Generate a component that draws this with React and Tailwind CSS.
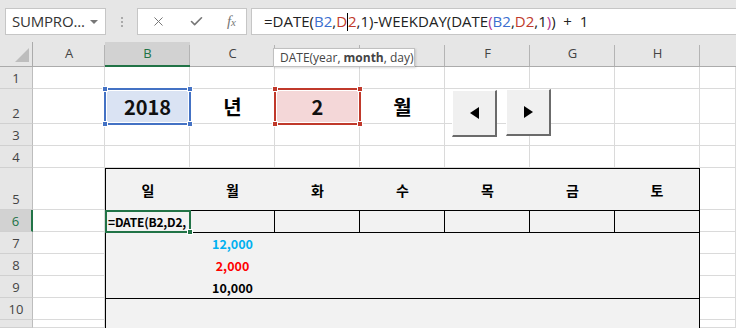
import { X, Check } from 'lucide-react';

const COLS = ['A', 'B', 'C', 'D', 'E', 'F', 'G', 'H', ''];
const ROWS = [
  { n: 1, h: 22 },
  { n: 2, h: 35 },
  { n: 3, h: 22 },
  { n: 4, h: 22 },
  { n: 5, h: 42 },
  { n: 6, h: 22 },
  { n: 7, h: 22 },
  { n: 8, h: 22 },
  { n: 9, h: 22 },
  { n: 10, h: 22 },
  { n: 11, h: 8 },
];
const DAYS = ['일', '월', '화', '수', '목', '금', '토'];

const ui = { fontFamily: '"Open Sans", "Noto Sans", sans-serif' };
const cell = { fontFamily: '"Noto Sans CJK KR", "Noto Sans", sans-serif' };

const GRID =
  'grid grid-cols-[33px_72px_repeat(7,85px)_1fr] grid-rows-[25px_22px_35px_22px_22px_42px_22px_22px_22px_22px_22px_8px]';

const Handle = ({ pos, color }) => (
  <span className={`absolute w-[6px] h-[6px] border border-white ${color} ${pos}`} />
);

const Formula = () => (
  <div className="flex items-center h-full pl-3 text-[15px] text-[#222] whitespace-nowrap" style={ui}>
    <span>=DATE(</span>
    <span className="text-[#3b6fcf]">B2</span>
    <span>,</span>
    <span className="text-[#c0392b]">D</span>
    <span className="inline-block w-px h-[18px] bg-black" />
    <span className="text-[#c0392b]">2</span>
    <span>,1)-WEEKDAY(DATE</span>
    <span className="text-[#b0308f]">(</span>
    <span className="text-[#3b6fcf]">B2</span>
    <span>,</span>
    <span className="text-[#c0392b]">D2</span>
    <span>,1</span>
    <span className="text-[#b0308f]">)</span>
    <span>)&nbsp;&nbsp;+&nbsp;&nbsp;1</span>
  </div>
);

const Toolbar = () => (
  <div className="h-[42px] bg-[#e6e6e6] flex items-start pt-2 shrink-0">
    <div className="ml-[5px] w-[101px] h-[27px] bg-white border border-[#c6c6c6] flex items-center justify-between pl-[6px] pr-[7px]">
      <span className="text-[15px] text-[#333] tracking-[-0.2px]" style={ui}>SUMPRO...</span>
      <span className="w-0 h-0 border-l-[4px] border-r-[4px] border-t-[4px] border-l-transparent border-r-transparent border-t-[#777]" />
    </div>
    <div className="w-[31px] h-[27px] flex flex-col items-center justify-center gap-[2px]">
      <span className="w-[2px] h-[2px] bg-[#aaa]" />
      <span className="w-[2px] h-[2px] bg-[#aaa]" />
      <span className="w-[2px] h-[2px] bg-[#aaa]" />
    </div>
    <div className="w-[110px] h-[27px] bg-white border border-[#c6c6c6] flex items-center justify-between pl-[13px] pr-[10px] text-[#777]">
      <X size={15} strokeWidth={1.6} />
      <Check size={15} strokeWidth={2.6} />
      <span className="text-[15px] italic" style={{ fontFamily: '"Liberation Serif", serif' }}>
        f<span className="text-[11px]">x</span>
      </span>
    </div>
    <div className="ml-[4px] flex-1 h-[27px] bg-white border border-[#c6c6c6] border-r-0">
      <Formula />
    </div>
  </div>
);

const BaseGrid = () => (
  <div className={`${GRID} col-start-1 row-start-1`}>
    <div className="relative border-r border-b border-[#ababab]">
      <span
        className="absolute right-[3px] bottom-[4px] w-0 h-0"
        style={{ borderBottom: '14px solid #bdbdbd', borderLeft: '14px solid transparent' }}
      />
    </div>
    {COLS.map((c) => (
      <div
        key={'h' + c}
        className={`relative flex items-center justify-center text-[13px] ${
          c === 'B'
            ? 'bg-[#d2d2d2] text-[#217346] border-b-2 border-[#217346]'
            : 'text-[#444] border-b border-[#ababab]'
        }`}
        style={ui}
      >
        {c}
        {c !== '' && <span className="absolute right-0 top-[3px] bottom-0 w-px bg-[#b4b4b4]" />}
      </div>
    ))}
    {ROWS.map((r) => (
      <div key={r.n} className="contents">
        <div
          className={`flex items-end justify-center text-[13px] border-b border-b-[#d0d0d0] ${
            r.n === 6
              ? 'bg-[#d2d2d2] text-[#217346] border-r-2 border-r-[#217346]'
              : 'text-[#444] border-r border-r-[#bdbdbd]'
          }`}
          style={ui}
        >
          {r.h > 8 && r.n}
        </div>
        {COLS.map((c) => (
          <div key={c + r.n} className="bg-white border-r border-b border-[#dadada]" />
        ))}
      </div>
    ))}
  </div>
);

const Overlay = () => (
  <div className={`${GRID} col-start-1 row-start-1`} style={cell}>
    {/* B2 year */}
    <div className="col-start-3 row-start-3 relative">
      <div className="absolute -left-px -top-px -right-px -bottom-px border-2 border-[#4472c4]">
        <div className="w-full h-full border border-white bg-[#dae3f3] flex items-center justify-center text-[20px] font-bold text-[#111]">
          2018
        </div>
        <Handle pos="-left-[4px] -top-[4px]" color="bg-[#4472c4]" />
        <Handle pos="-right-[4px] -top-[4px]" color="bg-[#4472c4]" />
        <Handle pos="-left-[4px] -bottom-[4px]" color="bg-[#4472c4]" />
        <Handle pos="-right-[4px] -bottom-[4px]" color="bg-[#4472c4]" />
      </div>
    </div>
    <div className="col-start-4 row-start-3 flex items-center justify-center text-[20px] font-bold text-black">년</div>
    <div className="col-start-5 row-start-3 relative">
      <div className="absolute -left-px -top-px -right-px -bottom-px border-2 border-[#c0392b]">
        <div className="w-full h-full border border-white bg-[#f4d7d8] flex items-center justify-center text-[20px] font-bold text-[#111]">
          2
        </div>
        <Handle pos="-left-[4px] -top-[4px]" color="bg-[#c0392b]" />
        <Handle pos="-right-[4px] -top-[4px]" color="bg-[#c0392b]" />
        <Handle pos="-left-[4px] -bottom-[4px]" color="bg-[#c0392b]" />
        <Handle pos="-right-[4px] -bottom-[4px]" color="bg-[#c0392b]" />
      </div>
    </div>
    <div className="col-start-6 row-start-3 flex items-center justify-center text-[20px] font-bold text-black">월</div>

    {/* calendar table */}
    <div className="col-[3/10] row-[6/13] border-l border-t border-r border-black bg-[#f2f2f2] flex flex-col">
      <div className="h-[42px] border-b border-black grid grid-cols-[84px_85px_85px_85px_85px_85px_1fr] shrink-0">
        {DAYS.map((d) => (
          <div key={d} className="flex items-center justify-center pt-[1px] text-[14px] font-bold text-black">{d}</div>
        ))}
      </div>
      <div className="h-[22px] border-b border-black grid grid-cols-[84px_85px_85px_85px_85px_85px_1fr] shrink-0">
        {DAYS.map((d, i) => (
          <div key={d} className={`relative ${i < 6 ? 'border-r border-black' : ''}`}>
            {i === 0 && (
              <div className="absolute -left-px -top-px -right-[2px] -bottom-px border-2 border-[#217346] flex items-center pl-[1px] text-[12px] tracking-[-0.2px] font-bold text-black whitespace-nowrap bg-[#f2f2f2] z-10">
                =DATE(B2,D2,
                <span className="absolute -right-[4px] -bottom-[4px] w-[6px] h-[6px] bg-[#217346] border border-white" />
              </div>
            )}
          </div>
        ))}
      </div>
      <div className="h-[66px] border-b border-black grid grid-cols-[84px_85px_1fr] shrink-0">
        <div />
        <div className="flex flex-col text-[12.5px] font-bold">
          <div className="h-[22px] flex items-center justify-center text-[#00b0f0]">12,000</div>
          <div className="h-[22px] flex items-center justify-center text-[#ff0000]">2,000</div>
          <div className="h-[22px] flex items-center justify-center text-black">10,000</div>
        </div>
      </div>
    </div>
  </div>
);

export default function App() {
  return (
    <div className="w-[736px] h-[328px] overflow-hidden relative bg-white flex flex-col">
      <Toolbar />
      <div className="grid bg-[#e6e6e6]">
        <BaseGrid />
        <Overlay />
      </div>

      {/* function tooltip */}
      <div className="absolute left-[273px] top-[48px] w-[142px] h-[19px] bg-white border border-[#c0c0c0] shadow-[1px_1px_2px_rgba(0,0,0,0.15)] flex items-center pl-[6px] text-[12px] text-[#444] whitespace-nowrap" style={ui}>
        DATE(year, <span className="font-bold ml-[3px]">month</span>, day)
      </div>

      {/* form buttons */}
      <button className="absolute left-[452px] top-[90px] w-[45px] h-[47px] bg-[#f0f0f0] border-t border-l border-t-white border-l-white border-r-2 border-b-2 border-r-[#6b6b6b] border-b-[#6b6b6b] flex items-center justify-center">
        <span className="w-0 h-0 border-t-[6px] border-b-[6px] border-r-[9px] border-t-transparent border-b-transparent border-r-black" />
      </button>
      <button className="absolute left-[506px] top-[89px] w-[45px] h-[47px] bg-[#f0f0f0] border-t border-l border-t-white border-l-white border-r-2 border-b-2 border-r-[#6b6b6b] border-b-[#6b6b6b] flex items-center justify-center">
        <span className="w-0 h-0 border-t-[6px] border-b-[6px] border-l-[9px] border-t-transparent border-b-transparent border-l-black" />
      </button>
    </div>
  );
}
